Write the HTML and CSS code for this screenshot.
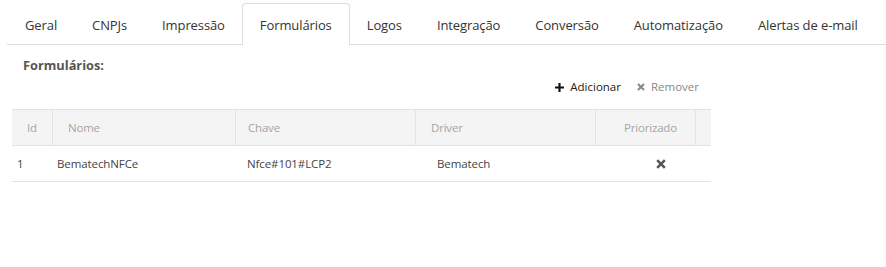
FILE: index.html
```html
<!DOCTYPE html>
<html lang="pt">
<head>
    <meta charset="UTF-8">
    <title>Configurações</title>
    <link rel="stylesheet" href="styles.css">
</head>
<body>
    <!-- Abas -->
    <ul class="tabs">
        <li class="tab">Geral</li>
        <li class="tab">CNPJs</li>
        <li class="tab">Impressão</li>
        <li class="tab active">Formulários</li>
        <li class="tab">Logos</li>
        <li class="tab">Integração</li>
        <li class="tab">Conversão</li>
        <li class="tab">Automatização</li>
        <li class="tab">Alertas de e-mail</li>
    </ul>

    <div class="panel">
        <h2 class="panel-title">Formulários:</h2>

        <div class="toolbar">
            <span class="tool add">
                <svg class="icon" viewBox="0 0 10 10"><path d="M3.8 0h2.4v3.8H10v2.4H6.2V10H3.8V6.2H0V3.8h3.8z"/></svg>
                Adicionar
            </span>
            <span class="tool remove">
                <svg class="icon" viewBox="0 0 10 10"><path d="M2.1 0.3L5 3.2 7.9 0.3 9.7 2.1 6.8 5l2.9 2.9-1.8 1.8L5 6.8 2.1 9.7 0.3 7.9 3.2 5 0.3 2.1z"/></svg>
                Remover
            </span>
        </div>

        <!-- Grade de formulários -->
        <div class="grid">
            <div class="grid-row grid-head">
                <div class="cell c-id">Id</div>
                <div class="cell c-nome">Nome</div>
                <div class="cell c-chave">Chave</div>
                <div class="cell c-driver">Driver</div>
                <div class="cell c-prio">Priorizado</div>
                <div class="cell c-scroll"></div>
            </div>
            <div class="grid-row grid-body">
                <div class="cell c-id">1</div>
                <div class="cell c-nome">BematechNFCe</div>
                <div class="cell c-chave">Nfce#101#LCP2</div>
                <div class="cell c-driver">Bematech</div>
                <div class="cell c-prio">
                    <svg class="icon" viewBox="0 0 10 10"><path d="M2.1 0.3L5 3.2 7.9 0.3 9.7 2.1 6.8 5l2.9 2.9-1.8 1.8L5 6.8 2.1 9.7 0.3 7.9 3.2 5 0.3 2.1z"/></svg>
                </div>
                <div class="cell c-scroll"></div>
            </div>
        </div>
    </div>
</body>
</html>
```

FILE: styles.css
```css
body {
    margin: 0;
    font-family: "Open Sans", Arial, sans-serif;
    font-size: 13px;
    color: #333;
    background: #fff;
}

/* Abas */
.tabs {
    display: flex;
    list-style: none;
    margin: 3px 0 0 7px;
    padding: 0;
    border-bottom: 1px solid #ddd;
}

.tab {
    padding: 0 17px;
    height: 40px;
    line-height: 42px;
    font-size: 13px;
    letter-spacing: -0.1px;
    white-space: nowrap;
    color: #333;
    border: 1px solid transparent;
    border-bottom: none;
    margin-right: -1px;
}

.tab.active {
    border-color: #ddd;
    border-radius: 4px 4px 0 0;
    background: #fff;
    margin-bottom: -1px;
    padding-bottom: 1px;
}

/* Painel */
.panel {
    padding: 0 0 0 12px;
}

.panel-title {
    margin: 10px 0 0 11px;
    font-size: 12.8px;
    font-weight: bold;
    color: #555;
    line-height: 20px;
}

.toolbar {
    display: flex;
    justify-content: flex-end;
    gap: 16px;
    width: 687px;
    margin-top: 2px;
    line-height: 20px;
}

.tool {
    display: flex;
    align-items: center;
    gap: 6px;
    font-size: 11.5px;
}

.tool .icon {
    width: 9px;
    height: 9px;
}

.add {
    color: #222;
}

.add .icon {
    fill: #111;
}

.remove {
    color: #888;
}

.remove .icon {
    fill: #888;
    width: 8px;
    height: 8px;
}

/* Grade */
.grid {
    width: 699px;
    margin-top: 12px;
}

.grid-row {
    display: grid;
    grid-template-columns: 40px 183px 180px 180px 100px 16px;
}

.grid-head {
    background: #f4f4f4;
    border-top: 1px solid #e3e3e3;
    border-bottom: 1px solid #e3e3e3;
    color: #a5a5a5;
    font-size: 11.5px;
    letter-spacing: -0.2px;
    height: 35px;
    line-height: 35px;
}

.grid-head .cell {
    border-left: 1px solid #e3e3e3;
    padding-left: 15px;
}

.grid-head .cell:first-child {
    border-left: none;
    padding-left: 0;
    text-align: center;
}

.grid-head .c-chave {
    padding-left: 12px;
}

.grid-head .c-prio {
    padding-left: 10px;
    text-align: center;
}

.grid-body {
    height: 35px;
    line-height: 35px;
    border-bottom: 1px solid #e3e3e3;
    color: #444;
    font-size: 11.5px;
    letter-spacing: -0.1px;
}

.grid-body .cell {
    padding-left: 5px;
}

.grid-body .c-chave {
    padding-left: 12px;
}

.grid-body .c-driver {
    padding-left: 22px;
}

.grid-body .c-prio {
    padding-left: 0;
    display: flex;
    align-items: center;
    justify-content: center;
    transform: translateX(16px);
}

.grid-body .c-prio .icon {
    width: 10px;
    height: 10px;
    fill: #555;
}

.grid-body .c-scroll {
    display: none;
}
```
